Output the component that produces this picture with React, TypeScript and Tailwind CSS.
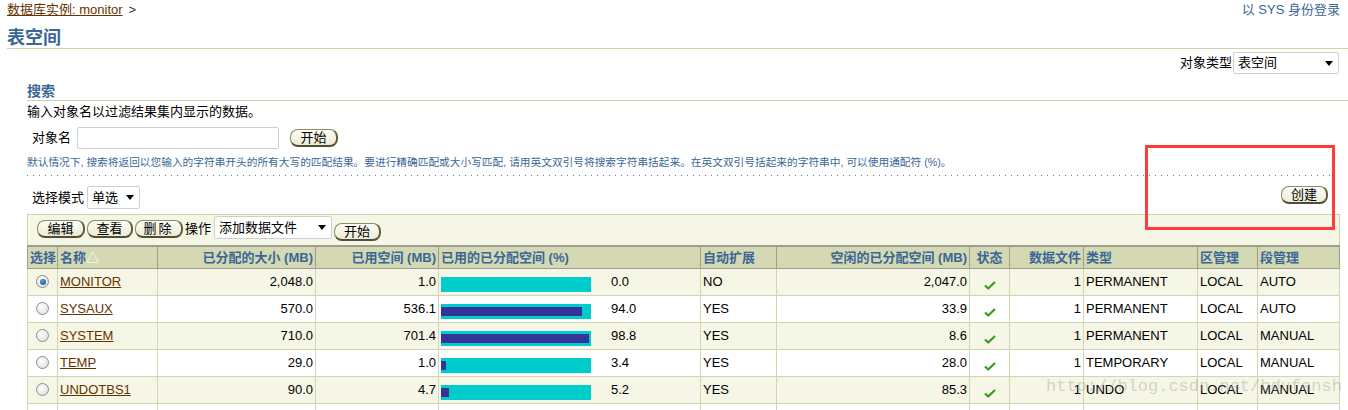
const rows = [
  { name: "MONITOR", alloc: "2,048.0", used: "1.0", pct: 0.0, auto: "NO", free: "2,047.0", files: "1", type: "PERMANENT", ext: "LOCAL", seg: "AUTO" },
  { name: "SYSAUX", alloc: "570.0", used: "536.1", pct: 94.0, auto: "YES", free: "33.9", files: "1", type: "PERMANENT", ext: "LOCAL", seg: "AUTO" },
  { name: "SYSTEM", alloc: "710.0", used: "701.4", pct: 98.8, auto: "YES", free: "8.6", files: "1", type: "PERMANENT", ext: "LOCAL", seg: "MANUAL" },
  { name: "TEMP", alloc: "29.0", used: "1.0", pct: 3.4, auto: "YES", free: "28.0", files: "1", type: "TEMPORARY", ext: "LOCAL", seg: "MANUAL" },
  { name: "UNDOTBS1", alloc: "90.0", used: "4.7", pct: 5.2, auto: "YES", free: "85.3", files: "1", type: "UNDO", ext: "LOCAL", seg: "MANUAL" },
  { name: "USERS", alloc: "5.0", used: "1.3", pct: 26.3, auto: "YES", free: "3.7", files: "1", type: "PERMANENT", ext: "LOCAL", seg: "AUTO" },
];

function Btn({ children, className = "" }: { children: React.ReactNode; className?: string }) {
  return (
    <button
      className={
        "h-[18px] rounded-[8px] border border-[#8c8c66] border-b-2 border-r-2 border-b-[#4f4f33] border-r-[#5f5f3f] bg-[linear-gradient(#fdfdf6,#ecebd6)] text-[13px] leading-[14px] text-black whitespace-nowrap " +
        className
      }
    >
      {children}
    </button>
  );
}

function Select({ value, className = "" }: { value: string; className?: string }) {
  return (
    <div
      className={
        "flex items-center justify-between bg-white border border-[#cfcfcf] rounded-[2px] pl-[4px] pr-[5px] text-[13px] text-black " +
        className
      }
    >
      <span>{value}</span>
      <span className="w-0 h-0 border-l-[4px] border-r-[4px] border-t-[5px] border-l-transparent border-r-transparent border-t-black" />
    </div>
  );
}

function Radio({ on }: { on: boolean }) {
  return (
    <span className="mx-auto flex w-[13px] h-[13px] rounded-full border border-[#8d8d8d] bg-[radial-gradient(circle_at_40%_35%,#ffffff,#d9d9d9)] items-center justify-center">
      {on && <span className="w-[6px] h-[6px] rounded-full bg-[radial-gradient(circle_at_40%_35%,#5aa0e6,#123e86)]" />}
    </span>
  );
}

function Check() {
  return (
    <svg width="12" height="9" viewBox="0 0 12 9" className="mx-auto mt-[8px]">
      <path d="M1 4.5 L4.2 7.5 L11 1" fill="none" stroke="#3a9a1e" strokeWidth="2.2" strokeLinejoin="round" />
    </svg>
  );
}

const th = "border-x border-t-2 border-b border-[#9e9e8e] px-[2px] text-[13px] font-bold text-[#3b6796] whitespace-nowrap";
const td = "border border-[#d2d6b2] px-[2px] text-[13px] text-black whitespace-nowrap";

export default function App() {
  return (
    <div className="relative w-[1348px] h-[410px] overflow-hidden bg-white font-['Liberation_Sans','Noto_Sans_CJK_SC',sans-serif] text-[13px] text-black">
      {/* breadcrumb + login */}
      <div className="flex items-center justify-between h-[20px] pl-[7px] pr-[8px]">
        <div className="flex items-center gap-[6px]">
          <span className="text-[#663300] underline">数据库实例: monitor</span>
          <span className="text-[#333]">&gt;</span>
        </div>
        <span className="text-[#3b6796]">以 SYS 身份登录</span>
      </div>

      {/* title */}
      <div className="ml-[7px] h-[29px] pt-[8px] flex items-center border-b border-[#d0d4ae]">
        <span className="text-[18px] font-bold text-[#3b6796] leading-[20px]">表空间</span>
      </div>

      {/* object type */}
      <div className="mt-[3px] h-[22px] flex items-center justify-end pr-[9px]">
        <span className="mr-[1px]">对象类型</span>
        <Select value="表空间" className="w-[106px] h-[22px]" />
      </div>

      {/* search */}
      <div className="ml-[27px]">
        <div className="h-[27px] pt-[8px] flex items-center border-b border-[#d0d4ae]">
          <span className="text-[14px] font-bold text-[#3b6796]">搜索</span>
        </div>
        <div className="h-[22px] flex items-center">输入对象名以过滤结果集内显示的数据。</div>
        <div className="mt-[4px] h-[22px] flex items-center pl-[5px]">
          <span>对象名</span>
          <div className="ml-[6px] w-[202px] h-[22px] bg-white border border-[#cfcfcf] rounded-[2px]" />
          <Btn className="ml-[11px] w-[48px]">开始</Btn>
        </div>
        <div className="mt-[4px] h-[18px] flex items-center text-[10.7px] text-[#3b6796] whitespace-nowrap">
          默认情况下, 搜索将返回以您输入的字符串开头的所有大写的匹配结果。要进行精确匹配或大小写匹配, 请用英文双引号将搜索字符串括起来。在英文双引号括起来的字符串中, 可以使用通配符 (%)。
        </div>
        <div className="mt-[4px] mr-[13px] h-px bg-[linear-gradient(to_right,#5d7fa6_1px,transparent_1px)] bg-[length:6px_1px]" />
      </div>

      {/* select mode + create */}
      <div className="ml-[27px] mt-[10px] h-[23px] flex items-start justify-between pr-[20px]">
        <div className="flex items-center h-[23px] pl-[5px]">
          <span className="mr-[3px]">选择模式</span>
          <Select value="单选" className="w-[53px] h-[23px]" />
        </div>
        <Btn className="w-[47px]">创建</Btn>
      </div>

      {/* toolbar */}
      <div className="ml-[27px] mr-[8px] mt-[5px] h-[31px] bg-[#f6f6e6] border-t border-x border-[#d0d4ae] flex items-start pl-[9px]">
        <Btn className="mt-[5px] w-[48px]">编辑</Btn>
        <Btn className="mt-[5px] ml-[2px] w-[46px]">查看</Btn>
        <Btn className="mt-[5px] ml-[2px] w-[48px] tracking-[2px]">删除</Btn>
        <span className="mt-[5px] ml-[2px] leading-[18px]">操作</span>
        <Select value="添加数据文件" className="mt-[1px] ml-[3px] w-[118px] h-[23px]" />
        <Btn className="mt-[8px] ml-[2px] w-[47px]">开始</Btn>
      </div>

      {/* table */}
      <table className="ml-[27px] w-[1312px] table-fixed border-collapse">
        <colgroup>
          {[30, 100, 158, 123, 262, 76, 193, 40, 74, 114, 60, 82].map((w, i) => (
            <col key={i} style={{ width: w }} />
          ))}
        </colgroup>
        <thead>
          <tr className="h-[22px] bg-[#d4d9b4]">
            <th className={th + " text-left px-0"}>选择</th>
            <th className={th + " text-left px-[1px]"}>
              名称<span className="text-white font-normal">△</span>
            </th>
            <th className={th + " text-right"}>已分配的大小 (MB)</th>
            <th className={th + " text-right"}>已用空间 (MB)</th>
            <th className={th + " text-left"}>已用的已分配空间 (%)</th>
            <th className={th + " text-left"}>自动扩展</th>
            <th className={th + " text-right"}>空闲的已分配空间 (MB)</th>
            <th className={th + " text-center"}>状态</th>
            <th className={th + " text-right"}>数据文件</th>
            <th className={th + " text-left px-[1px]"}>类型</th>
            <th className={th + " text-left px-[1px]"}>区管理</th>
            <th className={th + " text-left px-[1px]"}>段管理</th>
          </tr>
        </thead>
        <tbody>
          {rows.map((r, i) => (
            <tr key={r.name} className={"h-[27px] " + (i % 2 === 0 ? "bg-[#f6f6e6]" : "bg-white")}>
              <td className={td}>
                <Radio on={i === 0} />
              </td>
              <td className={td + " px-[1px]"}>
                <span className="text-[#663300] underline">{r.name}</span>
              </td>
              <td className={td + " text-right"}>{r.alloc}</td>
              <td className={td + " text-right"}>{r.used}</td>
              <td className={td}>
                <div className="flex items-center">
                  <div className="mt-[6px] w-[150px] h-[15px] bg-[#00cccc] flex items-center">
                    <div className="h-[9px] bg-[#333399]" style={{ width: (r.pct * 150) / 100 }} />
                  </div>
                  <span className="ml-[20px]">{r.pct.toFixed(1)}</span>
                </div>
              </td>
              <td className={td + " px-[1px]"}>{r.auto}</td>
              <td className={td + " text-right"}>{r.free}</td>
              <td className={td}>
                <Check />
              </td>
              <td className={td + " text-right"}>{r.files}</td>
              <td className={td + " px-[1px]"}>{r.type}</td>
              <td className={td + " px-[1px]"}>{r.ext}</td>
              <td className={td + " px-[1px]"}>{r.seg}</td>
            </tr>
          ))}
        </tbody>
      </table>

      {/* annotation box */}
      <div className="absolute left-[1145px] top-[145px] w-[190px] h-[85px] border-[3px] border-[#ff3c3c]" />

      {/* watermark */}
      <div className="absolute left-[1046px] top-[374px] font-['Liberation_Mono',monospace] text-[17px] text-[#9a9a9a]/40 whitespace-nowrap">
        http://blog.csdn.net/bdufensh
      </div>
    </div>
  );
}
